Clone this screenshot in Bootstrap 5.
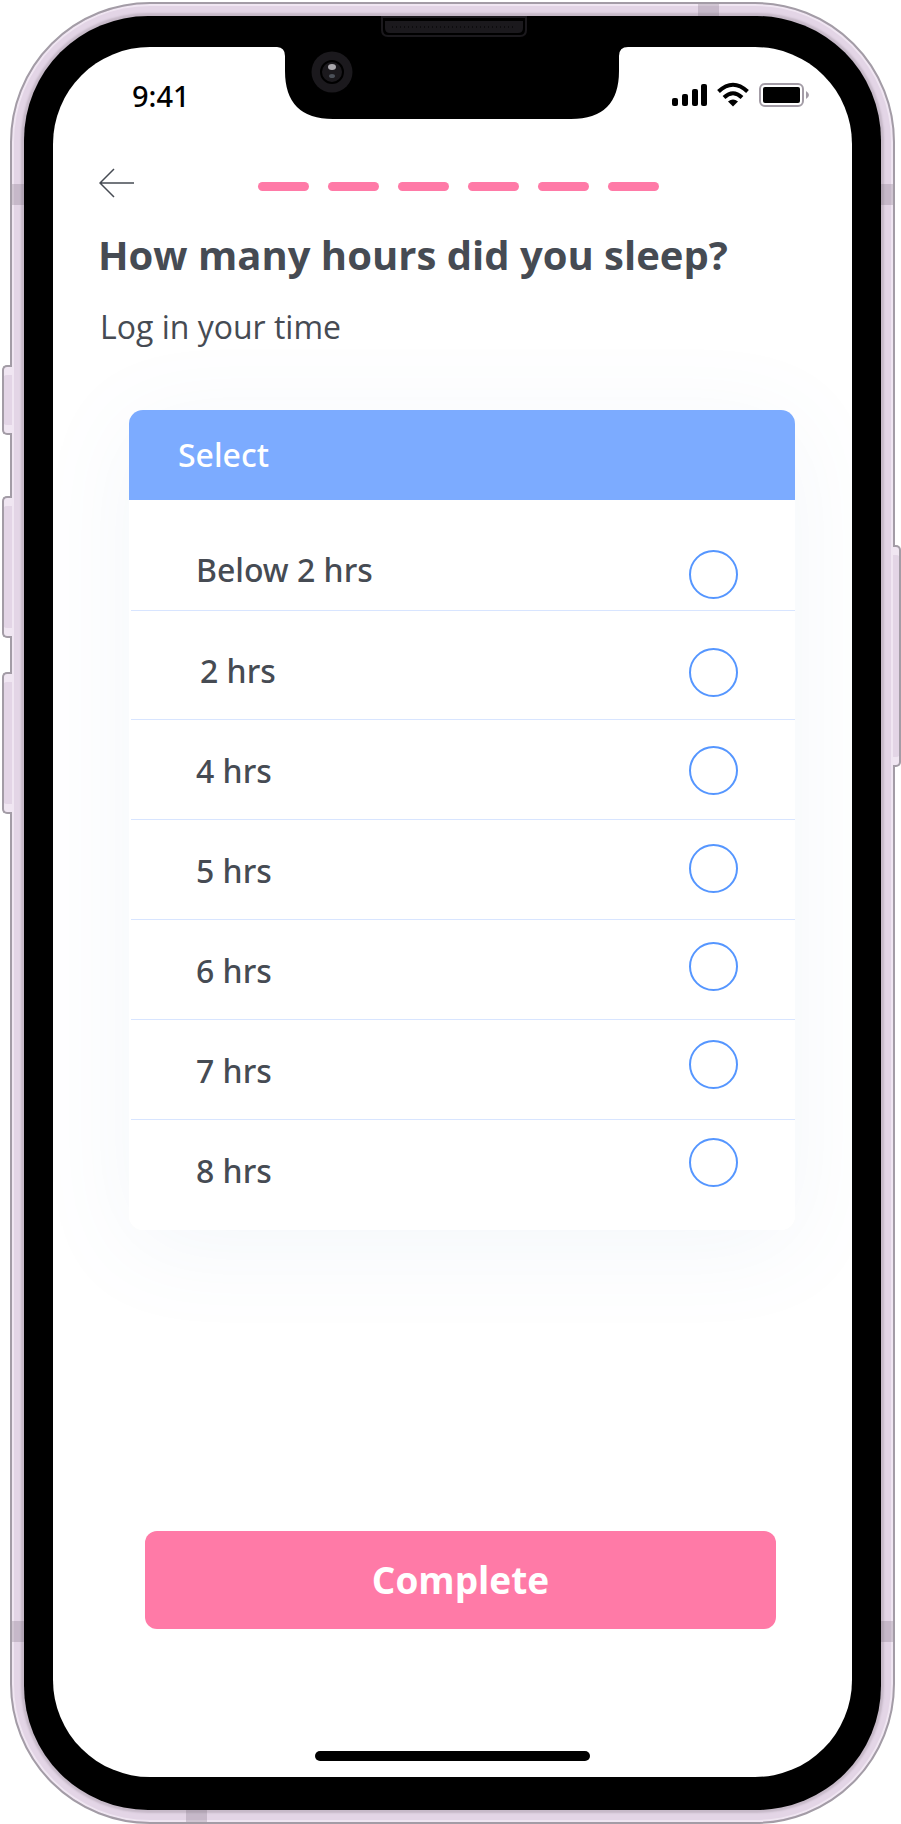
<!DOCTYPE html>
<html lang="en">
<head>
<meta charset="utf-8">
<meta name="viewport" content="width=device-width, initial-scale=1">
<title>Sleep log</title>
<link href="https://cdn.jsdelivr.net/npm/bootstrap@5.3.0/dist/css/bootstrap.min.css" rel="stylesheet">
<style>
  :root { --ink: #464b53; --pink: #ff7aa7; --sky: #7cabff; --ring: #5596ff; --rule: #d8e5ff; --shell: #e3d5e6; --edge: #a39ca6; }
  body { font-family: "Open Sans", "Noto Sans", sans-serif; color: var(--ink); background: #fff; overflow-x: hidden; }

  /* Phone body */
  .phone { margin: 2px 6px 0 10px; padding: 12px; border: 2px solid var(--edge); border-radius: 140px; background: var(--shell); box-shadow: inset 0 0 0 2px #f0e6f2; }
  .bezel { padding: 31px 29px 33px; border-radius: 124px; background: #000; box-shadow: 0 0 2px 3px #c6b9c8; }
  .screen { min-height: 1730px; border-radius: 97px; background: #fff; overflow: hidden; }
  .side-key { width: 10px; border: 2px solid var(--edge); border-right: 0; border-radius: 5px 0 0 5px; background: var(--shell); box-shadow: inset 0 9px 0 -1px #f0e6f2, inset 0 -9px 0 -1px #f0e6f2; left: -10px; }
  .key-mute { top: 361px; height: 70px; }
  .key-up { top: 492px; height: 142px; }
  .key-down { top: 668px; height: 142px; }
  .key-power { top: 541px; height: 222px; width: 8px; left: auto; right: -8px; border: 2px solid var(--edge); border-left: 0; border-radius: 0 5px 5px 0; }
  .band { background: rgba(110, 100, 115, .25); }
  .band-v { width: 12px; height: 21px; }
  .band-h { width: 21px; height: 12px; }
  .band-l { left: 0; } .band-r { right: 0; }
  .band-hi { top: 180px; } .band-lo { bottom: 180px; }
  .band-top { top: 0; right: 174px; } .band-bottom { bottom: 0; left: 174px; }
  .notch { top: 0; left: 50%; transform: translateX(-50%); z-index: 2; }

  /* Status bar */
  .status { padding: 27px 43px 0 79px; height: 90px; }
  .clock { font-family: "Noto Sans", "Open Sans", sans-serif; font-size: 29px; line-height: 44px; font-weight: 500; color: #000; }

  /* Question */
  .topbar { padding: 29px 46px 0; height: 75px; }
  .back { width: 37px; height: 34px; }
  .step { width: 51px; height: 9px; border-radius: 5px; background: var(--pink); }
  .steps { gap: 19px; margin-left: 122px; }
  .question { padding: 12px 45px 0; }
  .question h1 { font-size: 40px; line-height: 62px; font-weight: 700; }
  .question p { font-size: 32px; line-height: 50px; padding-left: 2px; }

  /* Options */
  .options { margin: 58px 57px 0 76px; border: 0; border-radius: 14px; box-shadow: 0 16px 100px rgba(90, 130, 190, .07); font-family: "Noto Sans", "Open Sans", sans-serif; font-size: 32px; line-height: 46px; font-weight: 500; }
  .options-head { height: 90px; padding: 0 49px; border-radius: 14px 14px 0 0; background: var(--sky); color: #fff; }
  .options-body { display: grid; padding-bottom: 10px; border-radius: 0 0 14px 14px; background: #fff; }
  .option-list, .option-radios { grid-area: 1 / 1; }
  .option-list li { min-height: 100px; padding: 2px 0 0 65px; margin-left: 2px; border-bottom: 1px solid var(--rule); }
  .option-list li:first-child { min-height: 111px; padding-top: 30px; }
  .option-list li:nth-child(2) { min-height: 109px; padding-top: 12px; }
  .option-list li:last-child { border-bottom: 0; }
  .option-radios { justify-self: end; gap: 49px; padding: 50px 57px 0 0; }
  .option-radios .form-check-input { width: 49px; height: 49px; margin: 0; border: 2px solid var(--ring); }
  .option-radios .form-check-input:checked { background-color: var(--ring); }

  /* Footer */
  .finish { margin: 301px 76px 0 92px; }
  .btn-finish { --bs-btn-color: #fff; --bs-btn-bg: var(--pink); --bs-btn-hover-color: #fff; --bs-btn-hover-bg: #f76797; --bs-btn-active-color: #fff; --bs-btn-active-bg: #ee5a8c; height: 98px; border: 0; border-radius: 12px; font-size: 37px; line-height: 50px; font-weight: 700; }
  .home-bar { width: 275px; height: 10px; border-radius: 5px; background: #000; margin: 122px auto 0; }
</style>
</head>
<body>
<div class="phone position-relative">
  <span class="side-key key-mute position-absolute"></span>
  <span class="side-key key-up position-absolute"></span>
  <span class="side-key key-down position-absolute"></span>
  <span class="side-key key-power position-absolute"></span>
  <div class="bezel">
    <main class="screen d-flex flex-column">
      <div class="status d-flex justify-content-between align-items-start">
        <span class="clock">9:41</span>
        <svg width="140" height="40" viewBox="0 0 140 40" aria-label="Signal, Wi-Fi and battery" role="img">
          <rect x="3" y="24" width="6" height="8" rx="2"/><rect x="13" y="20" width="6" height="12" rx="2"/><rect x="23" y="15" width="6" height="17" rx="2"/><rect x="32" y="10" width="6" height="22" rx="2"/>
          <g fill="none" stroke="#000" stroke-width="4"><path d="M49.500 17.500Q64 4 78.500 17.500"/><path d="M55 23.500Q64 15 73 23.500"/></g>
          <path d="M59 27.500Q64 23.500 69 27.500L64 32.500Z"/>
          <rect x="91" y="10" width="43" height="22" rx="5" fill="none" stroke="#a39ca6" stroke-width="2"/>
          <rect x="94" y="13" width="37" height="16" rx="2"/><path d="M137 17Q143 21 137 25Z" fill="#a39ca6"/>
        </svg>
      </div>
      <div class="topbar d-flex align-items-start">
        <button type="button" class="back btn p-0 border-0 d-flex" aria-label="Back">
          <svg width="37" height="34" viewBox="0 0 37 34" fill="none" stroke="#464b53" stroke-width="1.500"><path d="M35 17H1M15 3L1 17L15 31"/></svg>
        </button>
        <div class="steps d-flex pt-3" role="img" aria-label="Step 6 of 6">
          <span class="step"></span><span class="step"></span><span class="step"></span><span class="step"></span><span class="step"></span><span class="step"></span>
        </div>
      </div>
      <header class="question">
        <h1 class="mb-3">How many hours did you sleep?</h1>
        <p class="mb-0">Log in your time</p>
      </header>
      <form class="d-flex flex-column">
        <section class="options card">
          <div class="options-head d-flex align-items-center" id="options-title">Select</div>
          <div class="options-body" role="radiogroup" aria-labelledby="options-title">
            <ul class="option-list list-unstyled mb-0">
              <li class="d-flex align-items-center"><label for="h1">Below 2 hrs</label></li>
              <li class="d-flex align-items-center"><label class="ps-1" for="h2">2 hrs</label></li>
              <li class="d-flex align-items-center"><label for="h4">4 hrs</label></li>
              <li class="d-flex align-items-center"><label for="h5">5 hrs</label></li>
              <li class="d-flex align-items-center"><label for="h6">6 hrs</label></li>
              <li class="d-flex align-items-center"><label for="h7">7 hrs</label></li>
              <li class="d-flex align-items-center"><label for="h8">8 hrs</label></li>
            </ul>
            <div class="option-radios d-flex flex-column">
              <input class="form-check-input" type="radio" name="hours" id="h1">
              <input class="form-check-input" type="radio" name="hours" id="h2">
              <input class="form-check-input" type="radio" name="hours" id="h4">
              <input class="form-check-input" type="radio" name="hours" id="h5">
              <input class="form-check-input" type="radio" name="hours" id="h6">
              <input class="form-check-input" type="radio" name="hours" id="h7">
              <input class="form-check-input" type="radio" name="hours" id="h8">
            </div>
          </div>
        </section>
        <div class="finish d-grid"><button type="submit" class="btn btn-finish">Complete</button></div>
      </form>
      <div class="home-bar"></div>
    </main>
  </div>
  <svg class="notch position-absolute" width="352" height="116" viewBox="1 0 352 116" aria-hidden="true">
    <path d="M0 43Q9 43 9 52V67Q9 115 57 115H295Q343 115 343 67V52Q343 43 352 43V40H0Z"/>
    <path d="M106 13V26Q106 32 112 32H244Q250 32 250 26V13Z" fill="#000" stroke="#1b191d" stroke-width="2"/>
    <path d="M109 17H247V24Q247 29 242 29H114Q109 29 109 24Z" fill="#1b191d"/>
    <path d="M116 23H240" stroke="#000" stroke-dasharray="1 3"/>
    <circle cx="56" cy="68" r="20.500" fill="#1b191d"/><circle cx="56" cy="68" r="11" fill="#1b191d" stroke="#000" stroke-width="2"/>
    <ellipse cx="56" cy="63" rx="4" ry="3" fill="#aaa8ad"/><ellipse cx="56" cy="72" rx="3" ry="2" fill="#4b5058"/>
  </svg>
  <span class="band band-h band-top position-absolute"></span>
  <span class="band band-h band-bottom position-absolute"></span>
  <span class="band band-v band-l band-hi position-absolute"></span>
  <span class="band band-v band-r band-hi position-absolute"></span>
  <span class="band band-v band-l band-lo position-absolute"></span>
  <span class="band band-v band-r band-lo position-absolute"></span>
</div>
<script src="https://cdn.jsdelivr.net/npm/bootstrap@5.3.0/dist/js/bootstrap.bundle.min.js"></script>
</body>
</html>
